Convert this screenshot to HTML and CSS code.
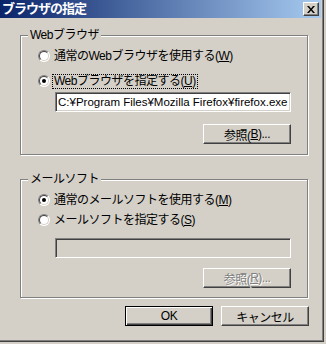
FILE: index.html
```html
<!DOCTYPE html>
<html lang="ja">

<head>
    <meta charset="UTF-8">
    <title>ブラウザの指定</title>
    <link rel="stylesheet" href="styles.css">
</head>

<body>
    <div class="window">
        <div class="frame">
            <!-- タイトルバー -->
            <div class="titlebar">
                <span class="title">ブラウザの指定</span>
                <span class="close">
                    <svg width="8" height="7" viewBox="0 0 8 7">
                        <path d="M0 0h2l2 2.5L6 0h2L5 3.5 8 7H6L4 4.5 2 7H0l3-3.5z" fill="#000" />
                    </svg>
                </span>
            </div>

            <div class="client">
                <!-- Webブラウザ -->
                <div class="group group-web">
                    <span class="legend">Webブラウザ</span>
                    <div class="row row-w1">
                        <span class="radio"></span>
                        <span class="label">通常のWebブラウザを使用する(<u>W</u>)</span>
                    </div>
                    <div class="row row-w2">
                        <span class="radio checked"></span>
                        <span class="label focus">Webブラウザを指定する(<u>U</u>)</span>
                    </div>
                    <div class="pathbox pathbox-web">
                        <div class="field">C:¥Program Files¥Mozilla Firefox¥firefox.exe</div>
                        <div class="btn btn-browse">参照(<u>B</u>)...</div>
                    </div>
                </div>

                <!-- メールソフト -->
                <div class="group group-mail">
                    <span class="legend">メールソフト</span>
                    <div class="row row-m1">
                        <span class="radio checked"></span>
                        <span class="label">通常のメールソフトを使用する(<u>M</u>)</span>
                    </div>
                    <div class="row row-m2">
                        <span class="radio"></span>
                        <span class="label">メールソフトを指定する(<u>S</u>)</span>
                    </div>
                    <div class="pathbox pathbox-mail">
                        <div class="field disabled"></div>
                        <div class="btn btn-browse disabled">参照(<u>R</u>)...</div>
                    </div>
                </div>

                <div class="actions">
                    <div class="btn btn-default">OK</div>
                    <div class="btn">キャンセル</div>
                </div>
            </div>
        </div>
    </div>
</body>

</html>
```

FILE: styles.css
```css
* {
    margin: 0;
    padding: 0;
    box-sizing: border-box;
}

body {
    width: 326px;
    height: 344px;
    background-color: #d4d0c8;
    font-family: "Liberation Sans", "Noto Sans CJK JP", sans-serif;
    font-size: 12px;
    color: #000;
    overflow: hidden;
}

/* 外枠 */
.window {
    width: 324px;
    height: 342px;
    border-right: 1px solid #404040;
    border-bottom: 1px solid #404040;
    background-color: #d4d0c8;
}

.frame {
    height: 100%;
    border-right: 1px solid #808080;
    border-bottom: 1px solid #808080;
    padding-right: 1px;
}

.titlebar {
    height: 18px;
    display: flex;
    align-items: center;
    justify-content: space-between;
    padding: 0 2px 0 2px;
    background: linear-gradient(to right, #0a246a, #a6caf0);
}

.title {
    color: #fff;
    font-weight: bold;
    font-size: 13px;
    letter-spacing: -1px;
    line-height: 18px;
}

.close {
    width: 16px;
    height: 14px;
    display: flex;
    align-items: center;
    justify-content: center;
    background-color: #d4d0c8;
    border: 1px solid;
    border-color: #fff #404040 #404040 #fff;
    box-shadow: inset -1px -1px #808080;
}

.client {
    padding-left: 20px;
}

/* グループボックス */
.group {
    position: relative;
    width: 288px;
    border: 1px solid #808080;
    box-shadow: inset 1px 1px #fff, 1px 1px #fff;
    display: flex;
    flex-direction: column;
}

.group-web {
    margin-top: 17px;
    height: 120px;
}

.group-mail {
    margin-top: 24px;
    height: 119px;
}

.legend {
    position: absolute;
    top: -9px;
    left: 7px;
    padding: 0 2px;
    background-color: #d4d0c8;
    line-height: 16px;
    letter-spacing: -0.5px;
}

.row {
    height: 16px;
    display: flex;
    align-items: center;
    padding-left: 17px;
    gap: 4px;
}

.row-w1 {
    margin-top: 12px;
}

.row-w2 {
    margin-top: 9px;
}

.row-m1 {
    margin-top: 12px;
}

.row-m2 {
    margin-top: 4px;
}

.label {
    line-height: 13px;
    white-space: nowrap;
    letter-spacing: -0.5px;
}

.label.focus {
    outline: 1px dotted #000;
    padding: 0 1px;
    margin-left: -1px;
}

/* ラジオボタン */
.radio {
    position: relative;
    width: 12px;
    height: 12px;
    flex: none;
    border-radius: 50%;
    background-color: #fff;
    border: 1px solid;
    border-color: #808080 #fff #fff #808080;
}

.radio::before {
    content: "";
    position: absolute;
    inset: 0;
    border-radius: 50%;
    border: 1px solid;
    border-color: #404040 #d4d0c8 #d4d0c8 #404040;
}

.radio.checked::after {
    content: "";
    position: absolute;
    left: 3px;
    top: 3px;
    width: 4px;
    height: 4px;
    border-radius: 50%;
    background-color: #000;
}

.pathbox {
    margin-left: 34px;
    width: 236px;
    display: flex;
    flex-direction: column;
    align-items: flex-end;
}

.pathbox-web {
    margin-top: 3px;
    gap: 12px;
}

.pathbox-mail {
    margin-top: 10px;
    gap: 10px;
}

.field {
    width: 100%;
    height: 20px;
    background-color: #fff;
    border: 1px solid;
    border-color: #808080 #fff #fff #808080;
    box-shadow: inset 1px 1px #404040, inset -1px -1px #d4d0c8;
    padding: 0 2px;
    font-size: 11.5px;
    line-height: 18px;
    white-space: nowrap;
    overflow: hidden;
}

.field.disabled {
    background-color: #d4d0c8;
}

/* ボタン */
.btn {
    width: 88px;
    height: 20px;
    display: flex;
    align-items: center;
    justify-content: center;
    background-color: #d4d0c8;
    border: 1px solid;
    border-color: #fff #404040 #404040 #fff;
    box-shadow: inset -1px -1px #808080;
    white-space: nowrap;
    letter-spacing: -0.5px;
}

.btn.disabled {
    color: #808080;
    text-shadow: 1px 1px #fff;
}

.btn-default {
    border: 1px solid #000;
    box-shadow: inset 1px 1px #fff, inset -1px -1px #404040, inset -2px -2px #808080;
}

.actions {
    margin-top: 8px;
    width: 289px;
    display: flex;
    justify-content: flex-end;
    gap: 8px;
}
```
